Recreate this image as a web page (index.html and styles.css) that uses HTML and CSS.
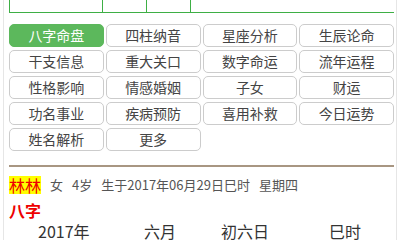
FILE: index.html
```html
<!DOCTYPE html>
<html>
<head>
  <meta charset="utf-8">
  <meta name="viewport" content="width=device-width, initial-scale=1.0">
  <title>八字命盘</title>
  <link rel="stylesheet" href="styles.css">
</head>
<body>
  <div class="page">
    <table class="top-table">
      <tr>
        <td class="c1"></td>
        <td class="c2"></td>
        <td class="c3"></td>
        <td class="c4"></td>
      </tr>
    </table>

    <div class="menu">
      <a class="menu-item active">八字命盘</a>
      <a class="menu-item">四柱纳音</a>
      <a class="menu-item">星座分析</a>
      <a class="menu-item">生辰论命</a>
      <a class="menu-item">干支信息</a>
      <a class="menu-item">重大关口</a>
      <a class="menu-item">数字命运</a>
      <a class="menu-item">流年运程</a>
      <a class="menu-item">性格影响</a>
      <a class="menu-item">情感婚姻</a>
      <a class="menu-item">子女</a>
      <a class="menu-item">财运</a>
      <a class="menu-item">功名事业</a>
      <a class="menu-item">疾病预防</a>
      <a class="menu-item">喜用补救</a>
      <a class="menu-item">今日运势</a>
      <a class="menu-item">姓名解析</a>
      <a class="menu-item">更多</a>
    </div>

    <hr class="divider">

    <div class="info">
      <span class="name">林林</span>
      <span>女</span>
      <span>4岁</span>
      <span>生于2017年06月29日巳时</span>
      <span>星期四</span>
    </div>

    <h3 class="section-title">八字</h3>
    <div class="bazi-row">
      <span>2017年</span>
      <span>六月</span>
      <span>初六日</span>
      <span>巳时</span>
    </div>
  </div>
</body>
</html>
```

FILE: styles.css
```css
* {
    box-sizing: border-box;
}
body {
    margin: 0;
    background-color: #fff;
    font-family: "Noto Sans CJK SC", "Noto Sans", sans-serif;
    color: #333;
}
.page {
    margin: 0 3px;
    padding: 0 2px 0 5px;
    border-left: 1px solid #e6e6e6;
    border-right: 1px solid #e6e6e6;
    min-height: 240px;
}

/* top table (scrolled off) */
.top-table {
    width: 385px;
    border-collapse: collapse;
}
.top-table td {
    height: 12px;
    padding: 0;
    border: 1px solid #3eaf45;
    border-top: none;
}
.top-table .c1 { width: 93px; }
.top-table .c2 { width: 44px; }
.top-table .c3 { width: 44px; }
.top-table .c4 { border-right: none; }

/* menu buttons */
.menu {
    display: grid;
    grid-template-columns: repeat(4, 1fr);
    gap: 3px 2px;
    width: 385px;
    margin-top: 11px;
}
.menu-item {
    display: block;
    height: 23px;
    line-height: 21px;
    text-align: center;
    font-size: 14px;
    color: #444;
    border: 1px solid #ccc;
    border-radius: 5px;
    background-color: #fff;
}
.menu-item.active {
    background-color: #5cb85c;
    border-color: #5cb85c;
    color: #fff;
}

.divider {
    width: 385px;
    margin: 14px 0 0 0;
    border: none;
    border-top: 2px solid #a89682;
}

.info {
    margin-top: 9px;
    font-size: 13px;
    color: #555;
    line-height: 18px;
    display: flex;
    align-items: center;
    gap: 9px;
}
.name {
    font-size: 16px;
    color: #e00;
    background-color: #ff0;
    line-height: 18px;
}

.section-title {
    margin: 5px 0 0 0;
    font-size: 16px;
    font-weight: bold;
    color: #e00;
    line-height: 22px;
}
.bazi-row {
    display: grid;
    grid-template-columns: 106px 77px 108px 1fr;
    font-size: 16px;
    line-height: 20px;
}
.bazi-row span {
    padding-left: 29px;
}
```
